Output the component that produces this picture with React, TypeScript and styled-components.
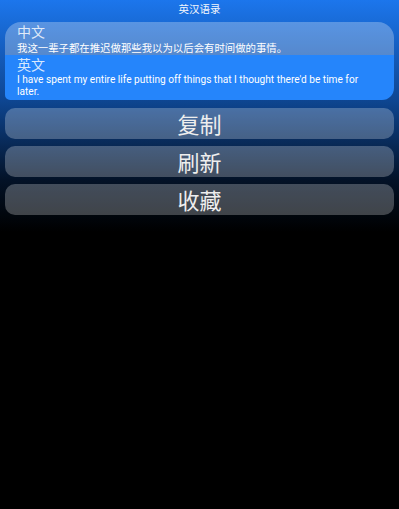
import React from "react";
import styled, { createGlobalStyle } from "styled-components";

const GlobalStyle = createGlobalStyle`
  html, body { margin: 0; padding: 0; background: #000; }
  * { box-sizing: border-box; }
`;

const Page = styled.div`
  min-height: 100vh;
  padding: 0 5px;
  background: linear-gradient(to bottom, #1c76ec 0px, #0e4692 100px, #031227 180px, #000 232px, #000 100%);
  font-family: Roboto, "Noto Sans CJK SC", "Noto Sans", sans-serif;
  color: #fff;
`;

const TitleBar = styled.div`
  height: 22px;
  padding-top: 1px;
  text-align: center;
  font-family: "Noto Sans CJK SC", sans-serif;
  font-size: 10.5px;
  line-height: 15px;
  color: #f2f6fc;
`;

const Card = styled.div`
  border-radius: 16px 16px 12px 5px;
  overflow: hidden;
`;

const Section = styled.div<{ $tone: "light" | "blue" }>`
  background: ${(p) => (p.$tone === "light" ? "rgba(255,255,255,0.28)" : "#2585fb")};
  padding: ${(p) => (p.$tone === "light" ? "1px 12px 1px" : "1px 16px 2px 12px")};
`;

const Label = styled.div<{ $gap?: boolean }>`
  font-family: "Noto Sans CJK SC", sans-serif;
  font-size: 14px;
  line-height: 17px;
  margin-bottom: ${(p) => (p.$gap ? "2px" : "0")};
  color: rgba(255, 255, 255, 0.82);
`;

const Body = styled.div<{ $lang: "zh" | "en" }>`
  font-family: ${(p) => (p.$lang === "zh" ? `"Noto Sans CJK SC", sans-serif` : `Roboto, sans-serif`)};
  font-size: ${(p) => (p.$lang === "zh" ? "10.4px" : "10.15px")};
  line-height: 12px;
  font-weight: 400;
  color: #fff;
  padding-top: ${(p) => (p.$lang === "zh" ? "0" : "1px")};
`;

const ButtonList = styled.div`
  display: flex;
  flex-direction: column;
  gap: 7px;
  margin-top: 8px;
`;

const Button = styled.button`
  height: 31px;
  border: none;
  border-radius: 10px;
  background: rgba(255, 255, 255, 0.25);
  color: #eeeeee;
  font-family: "Noto Sans CJK SC", sans-serif;
  font-size: 22px;
  line-height: 31px;
  padding: 0;
  text-align: center;
`;

export default function App() {
  return (
    <>
      <GlobalStyle />
      <Page>
        <TitleBar>英汉语录</TitleBar>
        <Card>
          <Section $tone="light">
            <Label $gap>中文</Label>
            <Body $lang="zh">我这一辈子都在推迟做那些我以为以后会有时间做的事情。</Body>
          </Section>
          <Section $tone="blue">
            <Label>英文</Label>
            <Body $lang="en">
              I have spent my entire life putting off things that I thought there'd be time for later.
            </Body>
          </Section>
        </Card>
        <ButtonList>
          <Button>复制</Button>
          <Button>刷新</Button>
          <Button>收藏</Button>
        </ButtonList>
      </Page>
    </>
  );
}
